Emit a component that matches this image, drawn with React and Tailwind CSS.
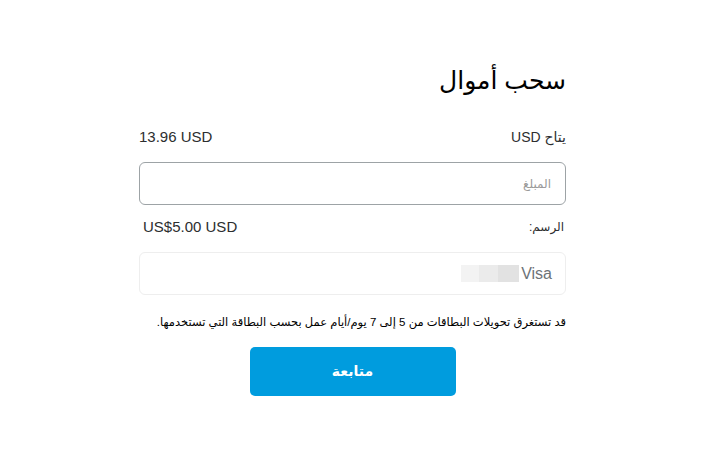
export default function App() {
  const f = { fontFamily: '"Liberation Sans", "DejaVu Sans", sans-serif' };
  return (
    <div className="w-[709px] h-[470px] bg-white text-[#2c2e2f]" style={f}>
      <div dir="rtl" className="ml-[139px] w-[427px] pt-[62px] flex flex-col">
        <h1 className="text-[25px] leading-[36px] text-black">سحب أموال</h1>
        <div className="mt-[30px] flex justify-between text-[15px] leading-[18px] text-[#2c2e2f]">
          <span className="text-[14px]">يتاح USD</span>
          <span dir="ltr">13.96 USD</span>
        </div>
        <div className="mt-[16px] h-[43px] rounded-[6px] border border-[#9da3a6] flex items-center px-[14px]">
          <span className="text-[12px] text-[#9a9a9a]">المبلغ</span>
        </div>
        <div className="mt-[13px] flex justify-between items-center text-[15px] leading-[18px]">
          <span className="text-[12px] pr-[2px]">الرسم:</span>
          <span dir="ltr" className="pl-[4px]">US$5.00 USD</span>
        </div>
        <div className="mt-[16px] h-[43px] rounded-[6px] border border-[#eeeeee] flex items-center px-[13px]">
          <span className="text-[16px] text-[#6c7378]">Visa</span>
          <div className="flex h-[17px] mr-[2px]" dir="ltr">
            <div className="w-[18px] bg-[#f3f3f3]"></div>
            <div className="w-[19px] bg-[#ebebeb]"></div>
            <div className="w-[21px] bg-[#e2e2e2]"></div>
          </div>
        </div>
        <p className="mt-[19px] text-[11.5px] leading-[16px] text-black">قد تستغرق تحويلات البطاقات من 5 إلى 7 يوم/أيام عمل بحسب البطاقة التي تستخدمها.</p>
        <div className="flex justify-center mt-[17px]">
          <button className="w-[206px] h-[49px] rounded-[5px] bg-[#009cde] text-white text-[14px] font-bold">متابعة</button>
        </div>
      </div>
    </div>
  );
}
